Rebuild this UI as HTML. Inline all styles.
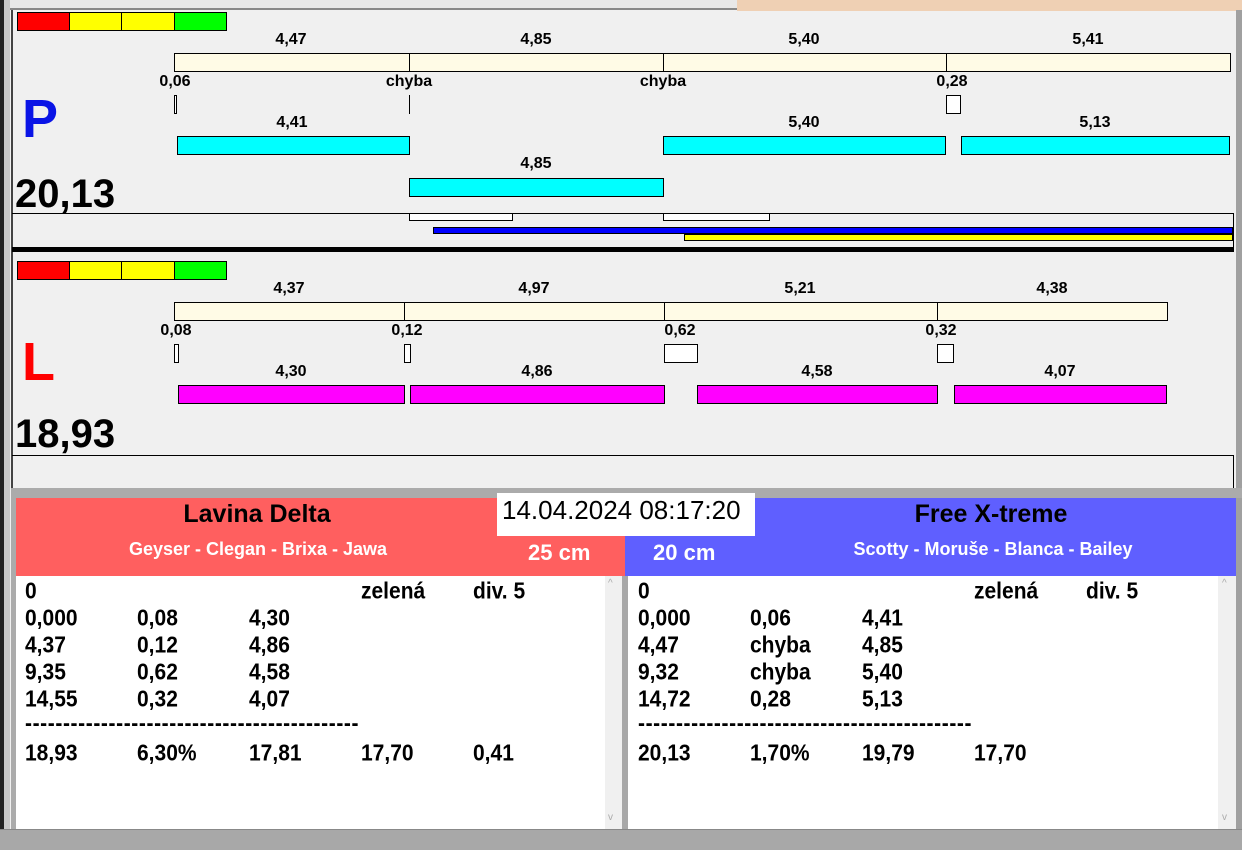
<!DOCTYPE html>
<html><head><meta charset="utf-8"><style>
*{margin:0;padding:0;box-sizing:border-box}
body{width:1242px;height:850px;background:#f0f0f0;position:relative;overflow:hidden;font-family:"Liberation Sans",Arial,sans-serif}
div,span{position:absolute}
.b{border:1px solid #000}
.be{background:#fffbe6;border:1px solid #000;height:19px}
.cy{background:#00ffff;border:1px solid #000;height:19px}
.mg{background:#ff00ff;border:1px solid #000;height:19px}
.wb{background:#fff;border:1px solid #000}
.lb{font-weight:bold;font-size:16px;transform:translateX(-50%);white-space:nowrap}
.t{font-weight:bold;font-size:21px;white-space:nowrap;transform:scaleY(1.08);transform-origin:0 0}
</style></head><body>
<!-- top strip -->
<div style="left:0;top:0;width:737px;height:10px;background:#e8e8e8;border-bottom:2px solid #888"></div>
<div style="left:737px;top:0;width:505px;height:11px;background:#efd0b4"></div>
<div style="left:0;top:0;width:4px;height:850px;background:#222"></div>
<div style="left:4px;top:0;width:6px;height:850px;background:#c8c8c8"></div>
<div style="left:11px;top:10px;width:2px;height:478px;background:#444"></div>
<div style="left:1236px;top:10px;width:6px;height:840px;background:#a0a0a0"></div>

<!-- P panel -->
<div class="b" style="left:17px;top:12px;width:53px;height:19px;background:#f00"></div>
<div class="b" style="left:69px;top:12px;width:53px;height:19px;background:#ff0"></div>
<div class="b" style="left:121px;top:12px;width:54px;height:19px;background:#ff0"></div>
<div class="b" style="left:174px;top:12px;width:53px;height:19px;background:#0f0"></div>
<span class="lb" style="left:291px;top:31px">4,47</span>
<span class="lb" style="left:536px;top:31px">4,85</span>
<span class="lb" style="left:804px;top:31px">5,40</span>
<span class="lb" style="left:1088px;top:31px">5,41</span>
<div class="be" style="left:174px;top:53px;width:236px"></div>
<div class="be" style="left:409px;top:53px;width:255px"></div>
<div class="be" style="left:663px;top:53px;width:284px"></div>
<div class="be" style="left:946px;top:53px;width:285px"></div>
<span class="lb" style="left:175px;top:73px">0,06</span>
<span class="lb" style="left:409px;top:73px">chyba</span>
<span class="lb" style="left:663px;top:73px">chyba</span>
<span class="lb" style="left:952px;top:73px">0,28</span>
<div class="wb" style="left:174px;top:95px;width:3px;height:19px"></div>
<div style="left:409px;top:95px;width:1px;height:19px;background:#000"></div>
<div class="wb" style="left:946px;top:95px;width:15px;height:19px"></div>
<span style="left:22px;top:88px;font-size:54px;font-weight:bold;color:#0a14e6">P</span>
<span class="lb" style="left:292px;top:114px">4,41</span>
<span class="lb" style="left:804px;top:114px">5,40</span>
<span class="lb" style="left:1095px;top:114px">5,13</span>
<div class="cy" style="left:177px;top:136px;width:233px"></div>
<div class="cy" style="left:663px;top:136px;width:283px"></div>
<div class="cy" style="left:961px;top:136px;width:269px"></div>
<span class="lb" style="left:536px;top:155px">4,85</span>
<div class="cy" style="left:409px;top:178px;width:255px"></div>
<span style="left:15px;top:172px;font-size:40px;font-weight:bold">20,13</span>
<div style="left:12px;top:213px;width:1222px;height:1px;background:#000"></div>
<div style="left:1233px;top:213px;width:1px;height:35px;background:#000"></div>
<div class="wb" style="left:409px;top:213px;width:104px;height:8px"></div>
<div class="wb" style="left:663px;top:213px;width:107px;height:8px"></div>
<div style="left:433px;top:227px;width:800px;height:7px;background:#0000ff;border:1px solid #000"></div>
<div style="left:684px;top:234px;width:549px;height:7px;background:#ff0;border:1px solid #000"></div>
<div style="left:12px;top:247px;width:1222px;height:5px;background:#000"></div>

<!-- L panel -->
<div class="b" style="left:17px;top:261px;width:53px;height:19px;background:#f00"></div>
<div class="b" style="left:69px;top:261px;width:53px;height:19px;background:#ff0"></div>
<div class="b" style="left:121px;top:261px;width:54px;height:19px;background:#ff0"></div>
<div class="b" style="left:174px;top:261px;width:53px;height:19px;background:#0f0"></div>
<span class="lb" style="left:289px;top:280px">4,37</span>
<span class="lb" style="left:534px;top:280px">4,97</span>
<span class="lb" style="left:800px;top:280px">5,21</span>
<span class="lb" style="left:1052px;top:280px">4,38</span>
<div class="be" style="left:174px;top:302px;width:231px"></div>
<div class="be" style="left:404px;top:302px;width:261px"></div>
<div class="be" style="left:664px;top:302px;width:274px"></div>
<div class="be" style="left:937px;top:302px;width:231px"></div>
<span class="lb" style="left:176px;top:322px">0,08</span>
<span class="lb" style="left:407px;top:322px">0,12</span>
<span class="lb" style="left:680px;top:322px">0,62</span>
<span class="lb" style="left:941px;top:322px">0,32</span>
<div class="wb" style="left:174px;top:344px;width:5px;height:19px"></div>
<div class="wb" style="left:404px;top:344px;width:7px;height:19px"></div>
<div class="wb" style="left:664px;top:344px;width:34px;height:19px"></div>
<div class="wb" style="left:937px;top:344px;width:17px;height:19px"></div>
<span style="left:22px;top:331px;font-size:54px;font-weight:bold;color:#f00">L</span>
<span class="lb" style="left:291px;top:363px">4,30</span>
<span class="lb" style="left:537px;top:363px">4,86</span>
<span class="lb" style="left:817px;top:363px">4,58</span>
<span class="lb" style="left:1060px;top:363px">4,07</span>
<div class="mg" style="left:178px;top:385px;width:227px"></div>
<div class="mg" style="left:410px;top:385px;width:255px"></div>
<div class="mg" style="left:697px;top:385px;width:241px"></div>
<div class="mg" style="left:954px;top:385px;width:213px"></div>
<span style="left:15px;top:412px;font-size:40px;font-weight:bold">18,93</span>
<div style="left:12px;top:455px;width:1222px;height:1px;background:#000"></div>
<div style="left:1233px;top:455px;width:1px;height:33px;background:#000"></div>

<!-- bottom -->
<div style="left:11px;top:488px;width:1231px;height:10px;background:#ababab"></div>
<div style="left:11px;top:498px;width:5px;height:352px;background:#ababab"></div>
<div style="left:16px;top:498px;width:609px;height:78px;background:#ff5f5f"></div>
<div style="left:625px;top:498px;width:611px;height:78px;background:#5f5fff"></div>
<div style="left:497px;top:493px;width:258px;height:43px;background:#fff"></div>
<span style="left:502px;top:495px;font-size:26px">14.04.2024 08:17:20</span>
<span style="left:257px;top:500px;font-size:25px;font-weight:bold;transform:translateX(-50%)">Lavina Delta</span>
<span style="left:258px;top:539px;font-size:18px;font-weight:bold;color:#fff;transform:translateX(-50%);white-space:nowrap">Geyser - Clegan - Brixa - Jawa</span>
<span style="left:528px;top:540px;font-size:22px;font-weight:bold;color:#fff">25 cm</span>
<span style="left:653px;top:540px;font-size:22px;font-weight:bold;color:#fff">20 cm</span>
<span style="left:991px;top:500px;font-size:25px;font-weight:bold;transform:translateX(-50%);white-space:nowrap">Free X-treme</span>
<span style="left:993px;top:539px;font-size:18px;font-weight:bold;color:#fff;transform:translateX(-50%);white-space:nowrap">Scotty - Moruše - Blanca - Bailey</span>

<div style="left:16px;top:576px;width:589px;height:253px;background:#fff"></div>
<div style="left:605px;top:576px;width:17px;height:253px;background:#f0f0f0"></div>
<span style="left:608px;top:578px;font-size:10px;color:#aaa">^</span>
<span style="left:608px;top:812px;font-size:10px;color:#aaa">v</span>
<div style="left:622px;top:576px;width:6px;height:254px;background:#a8a8a8"></div>
<div style="left:628px;top:576px;width:590px;height:253px;background:#fff"></div>
<div style="left:1218px;top:576px;width:18px;height:253px;background:#f0f0f0"></div>
<span style="left:1222px;top:578px;font-size:10px;color:#aaa">^</span>
<span style="left:1222px;top:812px;font-size:10px;color:#aaa">v</span>
<div style="left:0;top:829px;width:1242px;height:21px;background:#a8a8a8;border-top:1px solid #888"></div>

<span class="t" style="left:25px;top:579px">0</span><span class="t" style="left:361px;top:579px">zelená</span><span class="t" style="left:473px;top:579px">div. 5</span>
<span class="t" style="left:25px;top:606px">0,000</span><span class="t" style="left:137px;top:606px">0,08</span><span class="t" style="left:249px;top:606px">4,30</span>
<span class="t" style="left:25px;top:633px">4,37</span><span class="t" style="left:137px;top:633px">0,12</span><span class="t" style="left:249px;top:633px">4,86</span>
<span class="t" style="left:25px;top:660px">9,35</span><span class="t" style="left:137px;top:660px">0,62</span><span class="t" style="left:249px;top:660px">4,58</span>
<span class="t" style="left:25px;top:687px">14,55</span><span class="t" style="left:137px;top:687px">0,32</span><span class="t" style="left:249px;top:687px">4,07</span>
<span class="t" style="left:25px;top:711px;letter-spacing:0.6px">--------------------------------------------</span>
<span class="t" style="left:25px;top:741px">18,93</span><span class="t" style="left:137px;top:741px">6,30%</span><span class="t" style="left:249px;top:741px">17,81</span><span class="t" style="left:361px;top:741px">17,70</span><span class="t" style="left:473px;top:741px">0,41</span>

<span class="t" style="left:638px;top:579px">0</span><span class="t" style="left:974px;top:579px">zelená</span><span class="t" style="left:1086px;top:579px">div. 5</span>
<span class="t" style="left:638px;top:606px">0,000</span><span class="t" style="left:750px;top:606px">0,06</span><span class="t" style="left:862px;top:606px">4,41</span>
<span class="t" style="left:638px;top:633px">4,47</span><span class="t" style="left:750px;top:633px">chyba</span><span class="t" style="left:862px;top:633px">4,85</span>
<span class="t" style="left:638px;top:660px">9,32</span><span class="t" style="left:750px;top:660px">chyba</span><span class="t" style="left:862px;top:660px">5,40</span>
<span class="t" style="left:638px;top:687px">14,72</span><span class="t" style="left:750px;top:687px">0,28</span><span class="t" style="left:862px;top:687px">5,13</span>
<span class="t" style="left:638px;top:711px;letter-spacing:0.6px">--------------------------------------------</span>
<span class="t" style="left:638px;top:741px">20,13</span><span class="t" style="left:750px;top:741px">1,70%</span><span class="t" style="left:862px;top:741px">19,79</span><span class="t" style="left:974px;top:741px">17,70</span>
</body></html>
